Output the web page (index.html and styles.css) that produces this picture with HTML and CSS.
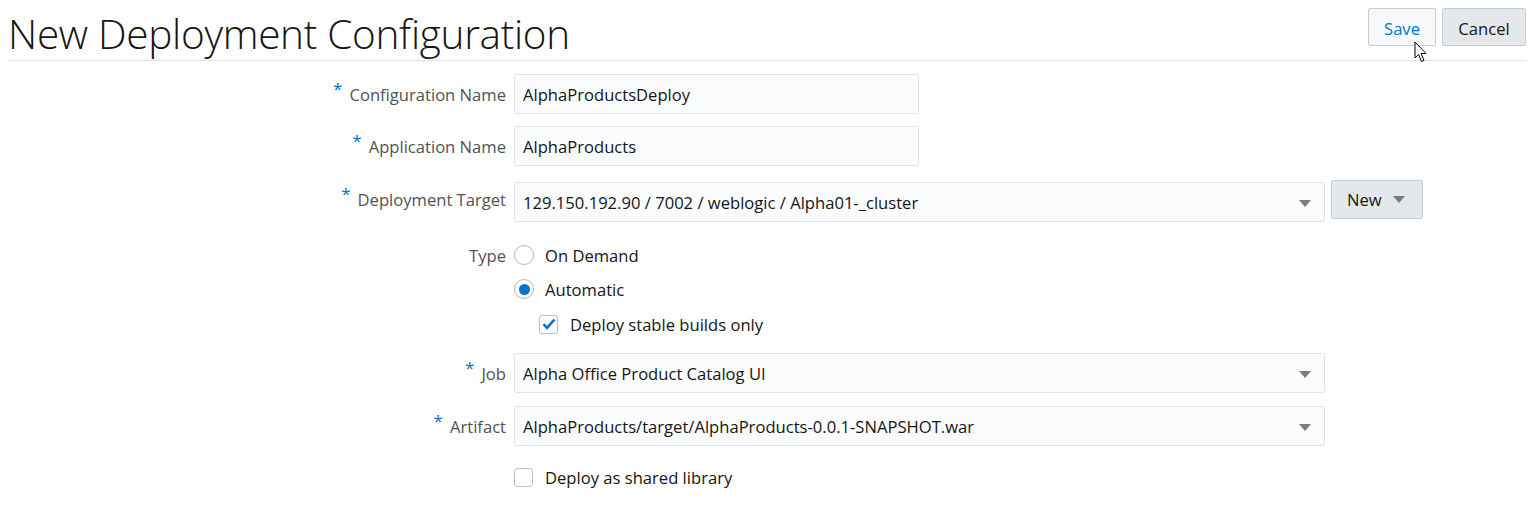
FILE: index.html
```html
<!DOCTYPE html>
<html>
<head>
<meta charset="utf-8">
<link rel="stylesheet" href="styles.css">
</head>
<body>
<header class="page-header">
  <h1 class="title">New Deployment Configuration</h1>
  <div class="actions">
    <button class="btn btn-save">Save</button>
    <button class="btn btn-cancel">Cancel</button>
    <svg class="cursor" width="14" height="22" viewBox="0 0 14 22"><path d="M1 1 L1 17 L4.5 13.5 L7.5 20.5 L10 19.4 L7 12.5 L12 12.5 Z" fill="#fff" stroke="#000" stroke-width="1" stroke-linejoin="round"/></svg>
  </div>
</header>

<form class="form">
  <div class="row r1">
    <label class="label"><span class="req">*</span>Configuration Name</label>
    <div class="field"><div class="input short">AlphaProductsDeploy</div></div>
  </div>
  <div class="row r2">
    <label class="label"><span class="req">*</span>Application Name</label>
    <div class="field"><div class="input short">AlphaProducts</div></div>
  </div>
  <div class="row r3">
    <label class="label lbl-target"><span class="req">*</span>Deployment Target</label>
    <div class="field field-target">
      <div class="input select">129.150.192.90 / 7002 / weblogic / Alpha01-_cluster<span class="caret"></span></div>
      <button class="btn btn-new" type="button">New<span class="caret small"></span></button>
    </div>
  </div>
  <div class="row r4">
    <label class="label">Type</label>
    <div class="field"><span class="radio"></span><span class="opt">On Demand</span></div>
  </div>
  <div class="row r5">
    <span class="label"></span>
    <div class="field"><span class="radio checked"></span><span class="opt">Automatic</span></div>
  </div>
  <div class="row r6">
    <span class="label"></span>
    <div class="field indent"><span class="check checked"><svg width="14" height="12" viewBox="0 0 14 12"><path d="M1.5 6.2 L5 9.8 L12.5 1.5" fill="none" stroke="#0572ce" stroke-width="2.6"/></svg></span><span class="opt">Deploy stable builds only</span></div>
  </div>
  <div class="row r7">
    <label class="label"><span class="req">*</span>Job</label>
    <div class="field"><div class="input select">Alpha Office Product Catalog UI<span class="caret"></span></div></div>
  </div>
  <div class="row r8">
    <label class="label"><span class="req">*</span>Artifact</label>
    <div class="field"><div class="input select">AlphaProducts/target/AlphaProducts-0.0.1-SNAPSHOT.war<span class="caret"></span></div></div>
  </div>
  <div class="row r9">
    <span class="label"></span>
    <div class="field"><span class="check"></span><span class="opt">Deploy as shared library</span></div>
  </div>
</form>
</body>
</html>
```

FILE: styles.css
```css
* { box-sizing: border-box; }
body {
  margin: 8px;
  font-family: "Open Sans", "Noto Sans", "Liberation Sans", sans-serif;
  color: #161513;
  background: #fff;
}
.page-header {
  display: flex;
  justify-content: space-between;
  align-items: flex-start;
  height: 53px;
  border-bottom: 1px solid #dfe3e8;
  width: 1518px;
}
.title {
  margin: 0;
  margin-top: -2px;
  font-size: 40.5px;
  font-weight: 300;
  line-height: 56px;
  letter-spacing: -0.3px;
  color: #161513;
}
.actions {
  display: flex;
  gap: 6px;
  position: relative;
}
.btn {
  font-family: inherit;
  font-size: 16.6px;
  height: 38px;
  border: 1px solid #c4ced7;
  border-radius: 2px;
  padding: 0 10px;
  color: #161513;
  background: #e4e8ea;
}
.btn-save {
  width: 68px;
  background: #f6f8fa;
  color: #0572ce;
  padding-top: 2px;
}
.btn-cancel {
  width: 84px;
  padding-top: 2px;
}
.cursor {
  position: absolute;
  left: 46px;
  top: 33px;
}
.form {
  display: flex;
  flex-direction: column;
}
.row {
  display: grid;
  grid-template-columns: 498px 1fr;
  column-gap: 8px;
  align-items: center;
}
.label {
  text-align: right;
  font-size: 16.6px;
  color: #4f5256;
}
.req {
  color: #0572ce;
  font-size: 17px;
  position: relative;
  top: -6px;
  margin-right: 7px;
}
.field {
  display: flex;
  align-items: center;
}
.input {
  height: 40px;
  border: 1px solid #dfe3e8;
  border-radius: 2px;
  background: #fbfcfd;
  font-size: 16.6px;
  padding: 0 8px;
  display: flex;
  align-items: center;
  color: #161513;
}
.short { width: 405px; }
.select {
  width: 811px;
  position: relative;
}
.caret {
  position: absolute;
  right: 13px;
  top: 17px;
  width: 0;
  height: 0;
  border-left: 6px solid transparent;
  border-right: 6px solid transparent;
  border-top: 7px solid #7b7b7b;
}
.r1 { margin-top: 13px; }
.r2 { margin-top: 12px; }
.r3 { margin-top: 14px; align-items: start; }
.lbl-target { margin-top: 8px; }
.field-target { align-items: flex-start; gap: 6px; }
.field-target .select { margin-top: 2px; }
.btn-new {
  width: 92px;
  height: 39px;
  display: flex;
  align-items: center;
  padding: 0 0 0 15px;
  position: relative;
}
.caret.small {
  position: static;
  margin-left: 11px;
  border-top-color: #7b7b7b;
}
.r4 { margin-top: 21px; height: 24px; }
.r5 { margin-top: 10px; height: 24px; }
.r6 { margin-top: 11px; height: 24px; }
.r7 { margin-top: 17px; }
.r8 { margin-top: 13px; }
.r9 { margin-top: 19px; height: 24px; }
.opt {
  font-size: 16.6px;
  color: #161513;
}
.radio {
  width: 20px;
  height: 20px;
  border: 1px solid #b0b7bd;
  border-radius: 50%;
  background: #fff;
  margin-right: 11px;
  display: flex;
  align-items: center;
  justify-content: center;
}
.radio.checked::after {
  content: "";
  width: 11px;
  height: 11px;
  border-radius: 50%;
  background: #0572ce;
}
.indent { padding-left: 25px; }
.check {
  width: 19px;
  height: 19px;
  border: 1px solid #b9c1c8;
  border-radius: 3px;
  background: #fff;
  margin-right: 12px;
  display: flex;
  align-items: center;
  justify-content: center;
}
```
